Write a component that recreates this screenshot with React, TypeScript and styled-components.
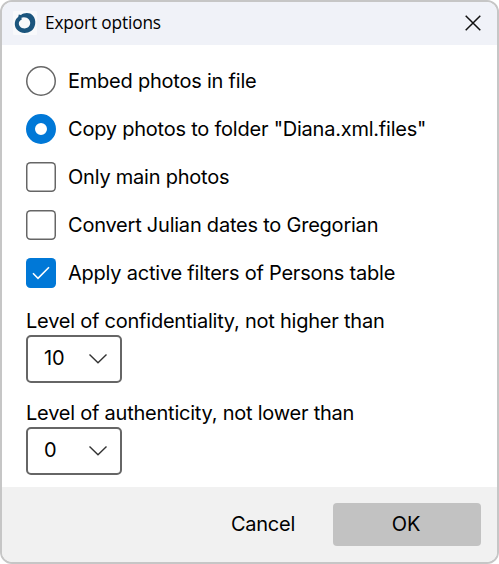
import React, { useState } from "react";
import styled, { createGlobalStyle } from "styled-components";

const GlobalStyle = createGlobalStyle`
  *, *::before, *::after { box-sizing: border-box; }
  body { margin: 0; background: #fff; }
`;

const Dialog = styled.main`
  width: 499px;
  height: 564px;
  display: flex;
  flex-direction: column;
  overflow: hidden;
  border: 2px solid #c6c6c6;
  border-radius: 12px;
  background: #fff;
  color: #000;
  font: 20px/24px Inter, sans-serif;
  letter-spacing: -0.225px;
`;

const TitleBar = styled.header`
  height: 43px;
  display: flex;
  align-items: center;
  padding: 0 16.5px 2px 11px;
  background: #f0f2f8;
`;

const Title = styled.h1`
  flex: 1;
  margin: 0 0 0 8px;
  font: 400 17.3px/24px "Open Sans", "Noto Sans", sans-serif;
  letter-spacing: -0.15px;
`;

const IconButton = styled.button`
  display: flex;
  padding: 0;
  border: 0;
  background: none;
`;

const Content = styled.section`
  flex: 1;
  display: flex;
  flex-direction: column;
  padding: 12px 24px 0;
`;

const OptionRow = styled.label`
  height: 48px;
  display: flex;
  align-items: center;
  gap: 12px;
`;

const Caption = styled.span`
  white-space: nowrap;
`;

const Radio = styled.input.attrs({ type: "radio" })`
  appearance: none;
  width: 30px;
  height: 30px;
  margin: 0;
  border-radius: 50%;
  background: #fff;
  box-shadow: inset 0 0 0 1.5px #666;
  &:checked {
    border: 9px solid #0078d7;
    box-shadow: none;
  }
`;

const CheckMark = styled.span<{ $checked: boolean }>`
  width: 30px;
  height: 30px;
  display: flex;
  border-radius: 4.5px;
  box-shadow: ${(p) => (p.$checked ? "none" : "inset 0 0 0 1.5px #666")};
  background: ${(p) => (p.$checked ? "#0078d7" : "#fff")};
`;

const HiddenCheckbox = styled.input.attrs({ type: "checkbox" })`
  position: absolute;
  opacity: 0;
  pointer-events: none;
`;

const Field = styled.div`
  height: 92px;
  display: flex;
  flex-direction: column;
  gap: 2px;
  padding-top: 12px;
`;

const Combo = styled.button`
  width: 96px;
  height: 48px;
  flex-shrink: 0;
  display: flex;
  align-items: center;
  justify-content: space-between;
  padding: 0 13px 2px 16px;
  border: 2px solid #666;
  border-radius: 5px;
  background: #fff;
  color: #000;
  font: inherit;
  letter-spacing: inherit;
`;

const Footer = styled.footer`
  height: 75px;
  display: flex;
  align-items: center;
  justify-content: flex-end;
  padding: 0 16px 0;
  background: #f1f1f1;
`;

const Button = styled.button<{ $primary?: boolean }>`
  width: ${(p) => (p.$primary ? "148px" : "138px")};
  height: 43px;
  padding: 0 2px 2px 0;
  border: 0;
  border-radius: 4px;
  background: ${(p) => (p.$primary ? "#c2c2c2" : "transparent")};
  color: #000;
  font: inherit;
  letter-spacing: inherit;
`;

const Logo = () => (
  <svg width="24" height="24" viewBox="0 0 24 24">
    <rect width="24" height="24" rx="1" fill="#f8f9fb" />
    <path
      fill="#1b557d"
      fillRule="evenodd"
      d="M5.8 3.4 8 4C11.2 1.5 17 1.2 20 4.7c3.8 4.6 2.7 12-1.9 15.4-4.5 3.1-11.3 2.4-14.5-1.8C.6 14.2 1.6 8.4 5.2 6ZM8.4 6.8 8.8 8.5C5.9 9.5 5 12.8 6.8 15.2c1.8 2.4 5.9 3 8.3 1.1 2.5-2 2.8-5.5.8-7.8C14.2 6.4 10.8 5.7 8.4 6.8Z"
    />
  </svg>
);

const CloseIcon = () => (
  <svg width="16" height="16" viewBox="0 0 16 16" fill="none" stroke="#111" strokeWidth="1.5">
    <path d="m.7.7 14.6 14.6M15.3.7.7 15.3" />
  </svg>
);

const Tick = () => (
  <svg width="30" height="30" fill="none" stroke="#fff" strokeWidth="1.6">
    <path d="m7 15.3 5 5L23 9.3" />
  </svg>
);

const Chevron = () => (
  <svg width="18" height="12" fill="none" stroke="#333" strokeWidth="1.4">
    <path d="m.5 2.4 8.5 8.4 8.5-8.4" />
  </svg>
);

const radios = ["Embed photos in file", 'Copy photos to folder "Diana.xml.files"'];
const checks = [
  "Only main photos",
  "Convert Julian dates to Gregorian",
  "Apply active filters of Persons table",
];
const fields = [
  { text: "Level of confidentiality, not higher than", value: "10" },
  { text: "Level of authenticity, not lower than", value: "0" },
];

export default function App() {
  const [mode, setMode] = useState(1);
  const [flags, setFlags] = useState([false, false, true]);

  return (
    <>
      <GlobalStyle />
      <Dialog role="dialog" aria-label="Export options">
        <TitleBar>
          <Logo />
          <Title>Export options</Title>
          <IconButton aria-label="Close"><CloseIcon /></IconButton>
        </TitleBar>
        <Content>
          {radios.map((text, i) => (
            <OptionRow key={text}>
              <Radio name="photos" checked={mode === i} onChange={() => setMode(i)} />
              <Caption>{text}</Caption>
            </OptionRow>
          ))}
          {checks.map((text, i) => (
            <OptionRow key={text}>
              <HiddenCheckbox
                checked={flags[i]}
                onChange={() => setFlags(flags.map((f, n) => (n === i ? !f : f)))}
              />
              <CheckMark $checked={flags[i]}>{flags[i] && <Tick />}</CheckMark>
              <Caption>{text}</Caption>
            </OptionRow>
          ))}
          {fields.map((f) => (
            <Field key={f.text}>
              <Caption>{f.text}</Caption>
              <Combo aria-label={f.text}>
                <span>{f.value}</span>
                <Chevron />
              </Combo>
            </Field>
          ))}
        </Content>
        <Footer>
          <Button>Cancel</Button>
          <Button $primary>OK</Button>
        </Footer>
      </Dialog>
    </>
  );
}
